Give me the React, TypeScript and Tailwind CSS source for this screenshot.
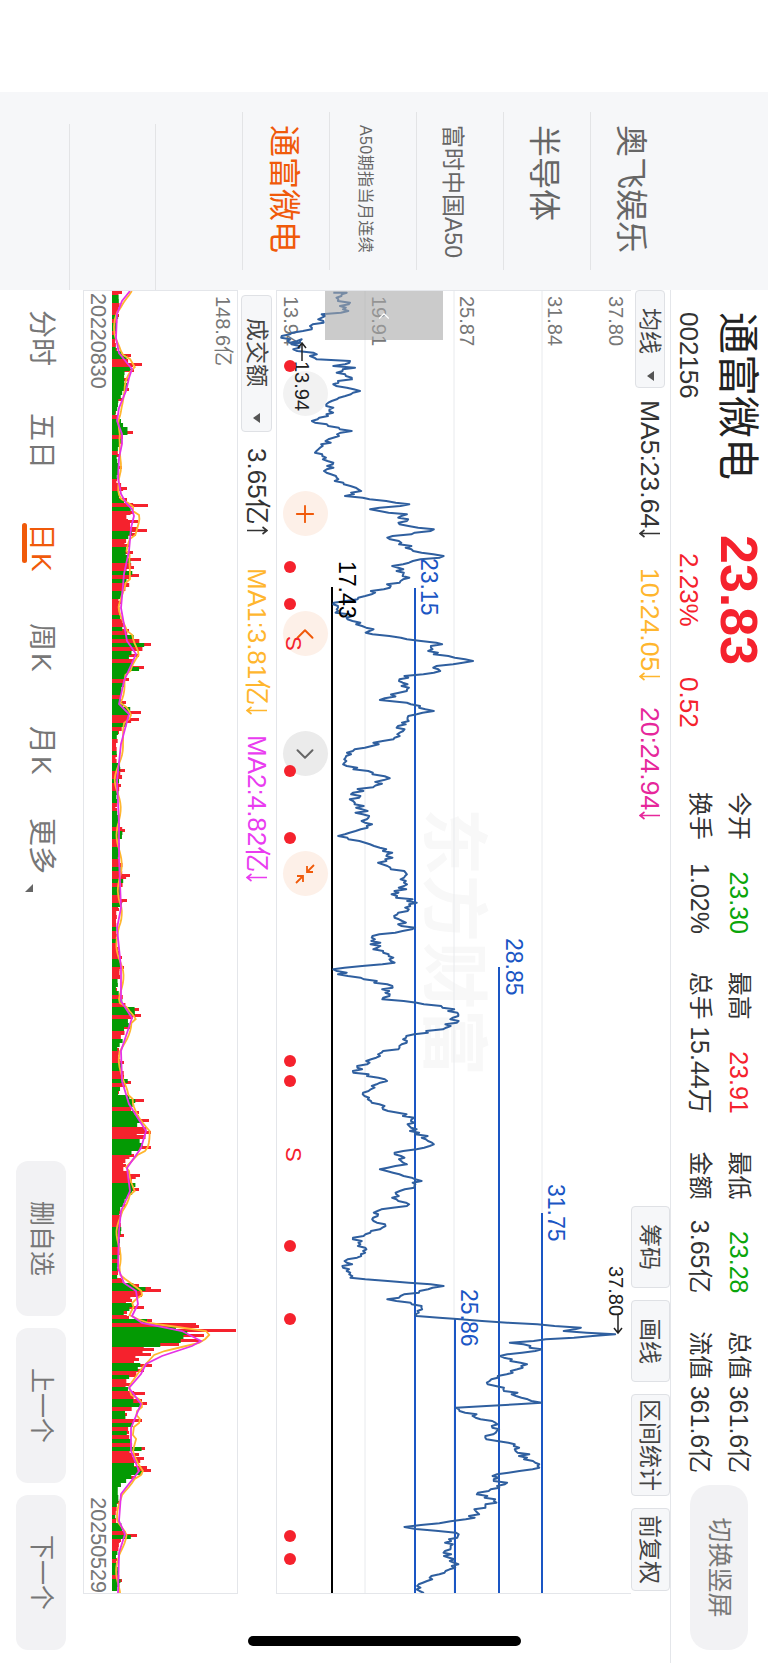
import { ChevronLeft, ChevronRight, Plus } from 'lucide-react';

// the app is shown in landscape, turned 90deg on the phone: chart data is
// traced in screen coords (x, y) and mapped with X = y, Y = 768 - x
const toPt = (x: number, y: number) => `${y.toFixed(1)},${(768 - x).toFixed(1)}`;
const rnd = (i: number) => {
  const v = Math.sin(i * 12.9898) * 43758.5453;
  return v - Math.floor(v);
};

const trace = (pts: number[][], sx: number, x0: number, y0: number) =>
  pts.map(([a, b]) => [a / sx + x0, b / 3 + y0]);

const priceKeys = [
  ...trace(
    [[190, 35], [230, 35], [205, 55], [240, 65], [210, 75], [235, 90], [155, 100], [160, 120], [120, 135], [125, 145], [60, 160], [35, 165], [60, 185], [95, 175], [70, 205], [130, 215], [120, 225], [140, 235], [240, 240], [190, 255], [255, 260], [200, 275], [245, 290], [190, 310], [270, 330], [175, 365], [190, 380], [135, 425], [245, 450], [190, 470], [135, 515], [190, 545], [170, 565], [220, 605], [265, 625], [225, 645]],
    3, 270, 280,
  ),
  ...trace(
    [[740, 20], [835, 40], [755, 55], [830, 70], [815, 100], [885, 115], [790, 140], [860, 185], [905, 195], [800, 225], [835, 260], [745, 315], [680, 340], [690, 360], [735, 395], [760, 430], [830, 445], [890, 455], [885, 490], [965, 510], [890, 525], [885, 545], [825, 555], [815, 565], [830, 600], [775, 627], [830, 635], [885, 660], [850, 670], [820, 695], [805, 740], [720, 780], [700, 820], [760, 850], [795, 862], [720, 905], [740, 970], [750, 1010], [690, 1035], [775, 1070], [800, 1085], [780, 1120], [830, 1150], [810, 1215]],
    2.04, 0, 490,
  ),
  ...trace(
    [[850, 5], [805, 50], [840, 85], [760, 105], [770, 140], [805, 185], [680, 205], [710, 225], [790, 250], [780, 295], [850, 305], [900, 315], [935, 340], [910, 380], [845, 400], [830, 420], [775, 465], [720, 510], [785, 535], [740, 580], [780, 620], [845, 650], [835, 675], [885, 730], [805, 755], [830, 790], [775, 805], [860, 840], [800, 890], [830, 915], [770, 930], [775, 985], [720, 1015], [745, 1040], [700, 1100], [715, 1130]],
    2.04, 0, 900,
  ),
  ...trace(
    [[905, 15], [790, 55], [860, 75], [850, 105], [1035, 125], [1185, 140], [1150, 150], [1255, 160], [1040, 185], [1105, 205], [1020, 225], [1075, 250], [995, 310], [1105, 365], [930, 380], [1015, 430], [990, 470], [1050, 490], [1075, 530], [1100, 560], [1005, 585], [1030, 610], [975, 635], [1010, 655], [950, 715], [825, 738], [930, 755], [905, 815], [935, 850], [880, 885], [850, 925], [860, 940]],
    2.04, 0, 1280,
  ),
];

const pricePath = () => {
  const out: string[] = [];
  priceKeys.forEach(([x, y], i) => {
    out.push(toPt(x, y));
    const next = priceKeys[i + 1];
    if (!next) return;
    const n = Math.floor(Math.abs(next[1] - y) / 1.6);
    for (let k = 1; k < n; k++) {
      const t = k / n;
      const j = (rnd(i * 31 + k) - 0.5) * 13;
      out.push(toPt(x + (next[0] - x) * t + j, y + (next[1] - y) * t));
    }
  });
  return out.join(' ');
};

// [y, x] keys of the volume peaks
const volKeys = [
  [290, 123], [313, 120], [330, 117], [347, 118], [353, 132], [362, 143], [368, 135], [377, 130], [387, 130], [397, 123], [410, 117], [430, 134], [440, 123], [453, 120], [465, 123], [477, 118], [486, 128], [492, 120], [497, 128], [503, 149], [510, 135], [519, 139], [528, 148], [532, 137], [543, 130], [550, 134], [557, 142], [565, 135], [573, 140], [600, 122], [618, 125], [628, 130], [642, 152], [653, 140], [665, 145], [677, 130], [697, 122], [700, 127], [710, 142], [717, 140], [730, 120], [753, 118], [768, 126], [783, 122], [807, 118], [828, 126], [853, 120], [873, 131], [887, 122], [898, 128], [907, 120], [933, 118], [955, 123], [965, 125], [987, 118], [1007, 140], [1013, 142], [1025, 132], [1047, 120], [1060, 125], [1080, 132], [1090, 120], [1098, 145], [1110, 140], [1118, 150], [1130, 152], [1145, 152], [1153, 135], [1163, 127], [1173, 141], [1187, 140], [1203, 127], [1210, 123], [1233, 125], [1267, 120], [1277, 122], [1283, 140], [1286, 152], [1288, 162], [1293, 143], [1298, 133], [1305, 145], [1310, 128], [1315, 130], [1318, 153], [1322, 197], [1324, 200], [1328, 237], [1333, 205], [1338, 200], [1342, 180], [1347, 155], [1352, 152], [1357, 140], [1363, 153], [1368, 145], [1373, 137], [1382, 132], [1391, 146], [1398, 143], [1401, 148], [1412, 128], [1418, 143], [1430, 130], [1446, 146], [1452, 140], [1456, 145], [1465, 148], [1468, 152], [1475, 137], [1483, 122], [1500, 120], [1517, 117], [1533, 138], [1538, 122], [1557, 118], [1578, 123], [1592, 118],
];

const ma2Keys = [
  [290, 131], [300, 123], [313, 118], [337, 117], [352, 120], [362, 128], [368, 133], [377, 130], [390, 127], [407, 120], [420, 118], [433, 123], [443, 123], [457, 120], [477, 119], [493, 122], [502, 127], [508, 133], [515, 135], [527, 132], [550, 130], [573, 125], [607, 122], [640, 128], [653, 137], [680, 125], [703, 120], [713, 130], [743, 122], [780, 118], [823, 120], [857, 120], [907, 122], [927, 118], [967, 122], [1000, 122], [1017, 133], [1050, 122], [1080, 123], [1103, 130], [1130, 147], [1147, 142], [1167, 128], [1190, 131], [1210, 122], [1230, 120], [1267, 119], [1282, 125], [1290, 137], [1303, 139], [1315, 133], [1322, 143], [1330, 183], [1340, 202], [1345, 193], [1355, 163], [1363, 147], [1373, 142], [1387, 130], [1403, 142], [1427, 132], [1450, 132], [1470, 140], [1493, 122], [1520, 120], [1533, 126], [1552, 120], [1593, 119],
];

const ma1Peak = [
  [1275, 122], [1283, 133], [1292, 145], [1297, 140], [1300, 132], [1305, 135], [1315, 130], [1322, 150], [1330, 207], [1335, 211], [1342, 200], [1352, 157], [1367, 143], [1385, 130], [1397, 133],
];

const at = (keys: number[][], y: number) => {
  for (let i = 0; i < keys.length - 1; i++) {
    if (y <= keys[i + 1][0]) {
      const t = (y - keys[i][0]) / (keys[i + 1][0] - keys[i][0]);
      return keys[i][1] + (keys[i + 1][1] - keys[i][1]) * t;
    }
  }
  return keys[keys.length - 1][1];
};

const ma2Path = ma2Keys.map(([y, x]) => toPt(x, y)).join(' ');
const ma1Path = (() => {
  const out: string[] = [];
  for (let y = 290; y <= 1594; y += 4) {
    if (y >= 1275 && y <= 1397) out.push(toPt(at(ma1Peak, y), y));
    else out.push(toPt(at(ma2Keys, y) + Math.sin(y / 9) * 2.5 + (at(volKeys, y) > 135 ? 4 : 0), y));
  }
  return out.join(' ');
})();

const volBars = (() => {
  const base: { d: string; red: boolean }[] = [];
  const bar = (y: number, x: number, h: number) => `M${y} ${768 - 113}V${768 - x}h${h}V${768 - 113}z`;
  for (let y = 290, i = 0; y < 1590; y += 4, i++) {
    const h = at(volKeys, y) - 113;
    base.push({ d: bar(y, 113 + h * (0.6 + 0.3 * rnd(i + 7)), 4), red: rnd(i * 3 + 1) > 0.56 });
  }
  const tips = volKeys.map(([y, x]) => bar(y, x, 3)).join('');
  return {
    red: base.filter((b) => b.red).map((b) => b.d).join(''),
    green: base.filter((b) => !b.red).map((b) => b.d).join(''),
    tips,
  };
})();

const dots = [365, 566, 603, 770, 837, 1060, 1080, 1245, 1318, 1535, 1558];

const tabs = [
  { label: '奥飞娱乐', cls: 'mt-[6px] text-[32px] text-[#666]' },
  { label: '半导体', cls: 'mt-[6px] text-[32px] text-[#666]' },
  { label: '富时中国A50', cls: 'mt-[14px] text-[23px] text-[#666]' },
  { label: 'A50期指当月连续', cls: 'mt-[16px] text-[16px] tracking-[0.4px] text-[#666]' },
  { label: '通富微电', cls: 'mt-[4px] text-[32px] text-[#f05a0a]' },
];

const stats = [
  ['今开', '23.30', 'text-[#0aa50a]', '换手', '1.02%'],
  ['最高', '23.91', 'text-[#f5222d]', '总手', '15.44万'],
  ['最低', '23.28', 'text-[#0aa50a]', '金额', '3.65亿'],
  ['总值', '361.6亿', 'text-[#333]', '流值', '361.6亿'],
];

function Arrow({ up, color }: { up?: boolean; color: string }) {
  return (
    <svg width="9" height="22" viewBox="0 0 9 22" fill="none" stroke={color} strokeWidth="1.6" className="ml-[1px] inline-block shrink-0">
      {up ? <path d="M4.5 21V1M1 5.5 4.5 1 8 5.5" /> : <path d="M4.5 1v20M1 16.5 4.5 21 8 16.5" />}
    </svg>
  );
}

function Caret() {
  return <div className="h-0 w-0 border-x-[5px] border-x-transparent border-t-[7px] border-t-[#555]" />;
}

function ToolButton({ label, className }: { label: string; className: string }) {
  return (
    <div className={`flex h-[39px] items-center justify-center rounded-[4px] border border-[#dfe1e5] bg-[#f6f7f9] text-[23px] text-[#444] ${className}`}>
      {label}
    </div>
  );
}

function NavButton({ label }: { label: string }) {
  return (
    <div className="flex h-[50px] w-[155px] items-center justify-center rounded-[12px] bg-[#f2f2f4] text-[25px] text-[#777]">
      {label}
    </div>
  );
}

function Header() {
  return (
    <div className="flex h-[98px] w-full border-b border-[#e4e6ea] pl-[22px]">
      <div className="w-[223px]">
        <div className="mt-[7px] h-[48px] text-[42px] leading-[48px] text-[#222]">通富微电</div>
        <div className="mt-[9px] text-[26px] leading-[30px] text-[#333]">002156</div>
      </div>
      <div className="w-[257px] text-[#f5222d]">
        <div className="mt-[1px] h-[56px] text-[52px] leading-[56px] font-bold">23.83</div>
        <div className="mt-[7px] flex text-[26px] leading-[30px]">
          <span className="ml-[18px] w-[124px]">2.23%</span>
          <span>0.52</span>
        </div>
      </div>
      <div className="grid w-[681px] grid-cols-4 gap-x-[38px] pt-[13px] text-[25px] leading-[32px] text-[#333]">
        {stats.map(([a, b, color, c, d]) => (
          <div key={a} className="w-[142px]">
            <div className="flex justify-between">
              <span className="text-[24px]">{a}</span>
              <span className={color}>{b}</span>
            </div>
            <div className="mt-[7px] flex justify-between">
              <span className="text-[24px]">{c}</span>
              <span>{d}</span>
            </div>
          </div>
        ))}
      </div>
      <div className="mt-[20px] ml-[12px] flex h-[58px] w-[165px] items-center justify-center rounded-[20px] bg-[#f2f2f4] text-[25px] text-[#777]">
        切换竖屏
      </div>
    </div>
  );
}

function Toolbar() {
  return (
    <div className="flex h-[39px] w-[1304px] items-center text-[26.5px] leading-[30px]">
      <div className="flex h-[30px] w-[98px] items-center justify-between rounded-[4px] border border-[#dfe1e5] bg-[#f6f7f9] pr-[6px] pl-[17px] text-[23px] text-[#444]">
        均线
        <Caret />
      </div>
      <div className="ml-[12px] flex w-[168px] items-center text-[#333]">
        MA5:23.64
        <Arrow color="#333" />
      </div>
      <div className="flex w-[139px] items-center text-[#ffb62e]">
        10:24.05
        <Arrow color="#ffb62e" />
      </div>
      <div className="flex items-center text-[#e6279b]">
        20:24.94
        <Arrow color="#e6279b" />
      </div>
      <div className="ml-auto flex gap-[12px] pr-[3px]">
        <ToolButton label="筹码" className="w-[82px]" />
        <ToolButton label="画线" className="w-[82px]" />
        <ToolButton label="区间统计" className="w-[102px]" />
        <ToolButton label="前复权" className="w-[83px]" />
      </div>
    </div>
  );
}

function CircleBtn({ left, bg, children }: { left: string; bg: string; children: React.ReactNode }) {
  return (
    <div className={`absolute top-[303px] flex h-[45px] w-[45px] items-center justify-center rounded-full ${left} ${bg}`}>
      {children}
    </div>
  );
}

function PriceChart() {
  return (
    <div className="relative h-[355px] w-[1304px] overflow-hidden border-x border-b border-[#e4e6ea] text-[20px] leading-[24px] text-[#777]">
      <div className="absolute top-[146px] left-[517px] text-[67px] leading-[64px] font-bold whitespace-nowrap text-[#f8f8f8]">东方财富</div>
      <span className="absolute top-[3px] left-[5px]">37.80</span>
      <span className="absolute top-[64px] left-[5px]">31.84</span>
      <span className="absolute top-[152px] left-[5px]">25.87</span>
      <span className="absolute top-[240px] left-[5px]">19.91</span>
      <span className="absolute top-[328px] left-[5px]">13.94</span>
      <svg className="absolute top-0 left-0" width="1304" height="355" viewBox="290 137 1304 355" fill="none">
        <path d="M290 403H1594M290 314H1594M290 226H1594" stroke="#e8eaed" strokeWidth="1" />
        <path d="M587 353H1594M966 269H1594M1212 226H1594M1317 313H1594" stroke="#1a56c4" strokeWidth="2" />
        <path d="M586 436H1594" stroke="#000" strokeWidth="2" />
        <polyline points={pricePath()} stroke="#2f5f9f" strokeWidth="2" strokeLinejoin="round" />
        <path d="M1313 150H1332M1327 146l5 4-5 4" stroke="#222" strokeWidth="1.5" />
        <path d="M342 466H360M347 462l-5 4 5 4" stroke="#222" strokeWidth="1.5" />
      </svg>
      <span className="absolute top-[189px] left-[267px] text-[23px] leading-[26px] text-[#1a56c4]">23.15</span>
      <span className="absolute top-[271px] left-[270px] text-[23px] leading-[26px] text-black">17.43</span>
      <span className="absolute top-[104px] left-[647px] text-[23px] leading-[26px] text-[#1a56c4]">28.85</span>
      <span className="absolute top-[62px] left-[893px] text-[23px] leading-[26px] text-[#1a56c4]">31.75</span>
      <span className="absolute top-[149px] left-[998px] text-[23px] leading-[26px] text-[#1a56c4]">25.86</span>
      <span className="absolute top-[3px] left-[975px] text-[#222]">37.80</span>
      <div className="absolute top-[188px] left-0 flex h-[118px] w-[49px] items-center justify-center bg-[#a8a8a8]/60">
        <ChevronLeft className="text-white" size={18} strokeWidth={1.5} />
      </div>
      <CircleBtn left="left-[80px]" bg="bg-[#f2f2f2]">
        <span />
      </CircleBtn>
      <span className="absolute top-[317px] left-[70px] text-[20px] text-[#222]">13.94</span>
      <CircleBtn left="left-[200px]" bg="bg-[#fdf0e8]">
        <Plus className="text-[#f05a0a]" size={28} strokeWidth={1.6} />
      </CircleBtn>
      <CircleBtn left="left-[320px]" bg="bg-[#fdf0e8]">
        <ChevronLeft className="text-[#f05a0a]" size={30} strokeWidth={1.6} />
      </CircleBtn>
      <CircleBtn left="left-[440px]" bg="bg-[#ebebeb]">
        <ChevronRight className="text-[#666]" size={30} strokeWidth={1.6} />
      </CircleBtn>
      <CircleBtn left="left-[560px]" bg="bg-[#fdf0e8]">
        <svg width="24" height="24" viewBox="0 0 24 24" fill="none" stroke="#f05a0a" strokeWidth="1.8">
          <path d="M3 3l7 7M10 4v6H4M21 21l-7-7M14 20v-6h6" />
        </svg>
      </CircleBtn>
      {dots.map((y) => (
        <div
          key={y}
          className="absolute h-[12px] w-[12px] rounded-full bg-[#f5222d]"
          style={{ left: y - 290 - 6, top: 478 - 137 - 6 }}
        />
      ))}
      <span className="absolute top-[326px] left-[345px] text-[22px] text-[#f5222d]">S</span>
      <span className="absolute top-[326px] left-[856px] text-[22px] text-[#f5222d]">S</span>
    </div>
  );
}

function VolumeBar() {
  return (
    <div className="flex h-[38px] w-[1304px] items-center text-[26px] leading-[30px]">
      <div className="ml-[5px] flex h-[31px] w-[137px] items-center justify-between rounded-[4px] border border-[#dfe1e5] bg-[#f6f7f9] pr-[8px] pl-[22px] text-[23px] text-[#444]">
        成交额
        <Caret />
      </div>
      <div className="ml-[16px] flex w-[120px] items-center text-[#333]">
        3.65亿
        <Arrow up color="#333" />
      </div>
      <div className="flex w-[167px] items-center text-[#ffb62e]">
        MA1:3.81亿
        <Arrow color="#ffb62e" />
      </div>
      <div className="flex items-center text-[#e93cf0]">
        MA2:4.82亿
        <Arrow color="#e93cf0" />
      </div>
    </div>
  );
}

function VolumeChart() {
  return (
    <div className="relative h-[155px] w-[1304px] overflow-hidden border border-[#e4e6ea] text-[#777]">
      <svg className="absolute top-0 left-0" width="1304" height="155" viewBox="290 530 1304 155" fill="none">
        <path d={volBars.tips} fill="#f5222d" />
        <path d={volBars.red} fill="#f5222d" />
        <path d={volBars.green} fill="#049a04" />
        <polyline points={ma1Path} stroke="#ffb62e" strokeWidth="1.8" />
        <polyline points={ma2Path} stroke="#e632e6" strokeWidth="1.8" />
      </svg>
      <span className="absolute top-[2px] left-[5px] text-[20px] leading-[24px]">148.6亿</span>
      <span className="absolute top-[127px] left-[2px] text-[21.5px] leading-[24px]">20220830</span>
      <span className="absolute top-[127px] right-0 text-[21.5px] leading-[24px]">20250529</span>
    </div>
  );
}

function BottomNav() {
  return (
    <div className="flex h-[83px] items-center pr-[13px] pl-[20px] text-[28px] text-[#777]">
      <span className="w-[103px]">分时</span>
      <span className="w-[110px]">五日</span>
      <span className="relative w-[100px] tracking-[2px] text-[#f05a0a]">
        日K
        <span className="absolute top-[35px] left-0 h-[5px] w-[40px] rounded-full bg-[#f05a0a]" />
      </span>
      <span className="w-[103px] tracking-[2px]">周K</span>
      <span className="w-[92px] tracking-[2px]">月K</span>
      <span className="flex items-end">
        更多
        <svg width="8" height="8" viewBox="0 0 8 8" className="mb-[5px] ml-[10px]">
          <path d="M0 0h8v8z" fill="#666" />
        </svg>
      </span>
      <div className="ml-auto flex gap-[12px]">
        <NavButton label="删自选" />
        <NavButton label="上一个" />
        <NavButton label="下一个" />
      </div>
    </div>
  );
}

export default function App() {
  return (
    <div className="relative h-[1663px] w-[768px] overflow-hidden bg-white font-['Liberation_Sans','Noto_Sans_CJK_SC',sans-serif]">
      <div className="absolute top-0 left-[768px] flex h-[768px] w-[1663px] origin-top-left rotate-90">
        <div className="w-[92px] shrink-0" />
        <div className="h-full w-[198px] shrink-0 bg-[#f6f7f9] pt-[91px]">
          {tabs.map((t) => (
            <div key={t.label} className="ml-[20px] flex h-[87px] w-[158px] items-center border-b border-[#e3e4e6] pl-[13px]">
              <span className={`whitespace-nowrap ${t.cls}`}>{t.label}</span>
            </div>
          ))}
          <div className="ml-[32px] h-[87px] w-[166px] border-b border-[#e3e4e6]" />
          <div className="ml-[32px] h-[86px] w-[166px] border-b border-[#e3e4e6]" />
        </div>
        <div className="flex h-full min-w-0 flex-1 flex-col">
          <Header />
          <Toolbar />
          <PriceChart />
          <VolumeBar />
          <VolumeChart />
          <BottomNav />
        </div>
      </div>
      <div className="absolute top-[1636px] left-[248px] h-[10px] w-[273px] rounded-full bg-black" />
    </div>
  );
}
